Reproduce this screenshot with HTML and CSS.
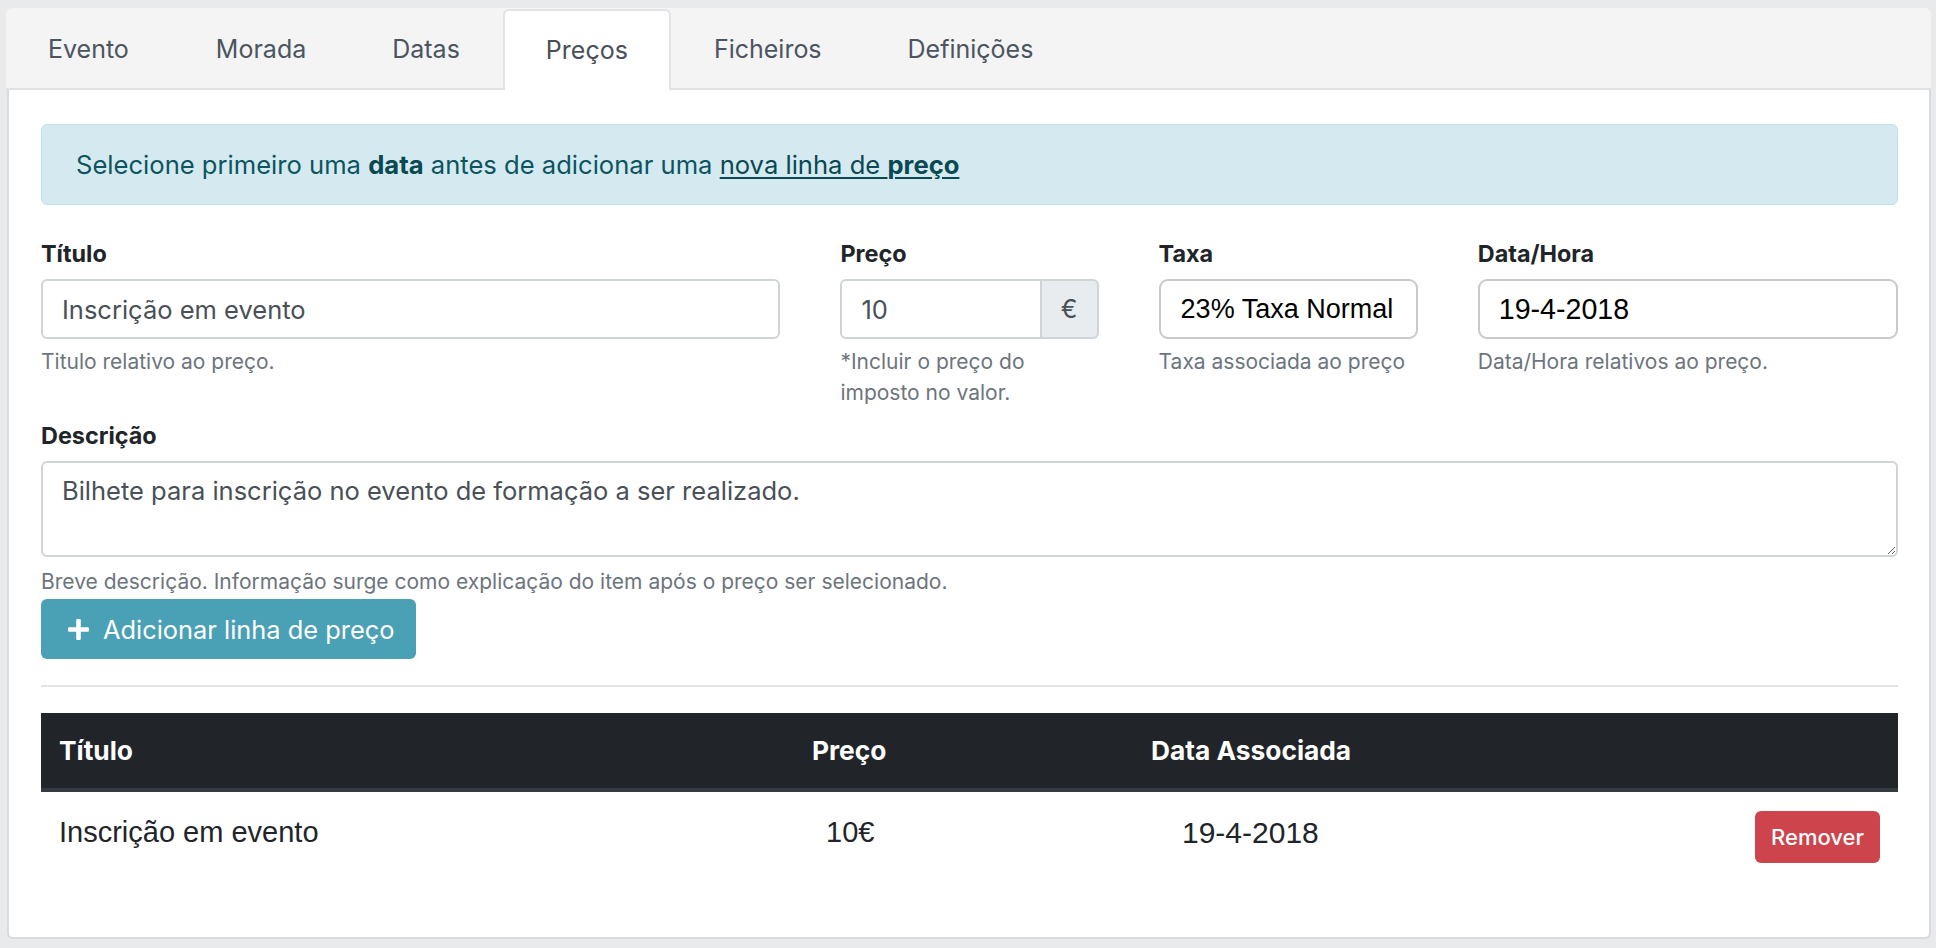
FILE: index.html
```html
<!DOCTYPE html>
<html lang="pt">
<head>
<meta charset="utf-8">
<title>Preços</title>
<link rel="stylesheet" href="styles.css">
</head>
<body>
<div class="page">
  <nav class="tabs">
    <a class="tab">Evento</a>
    <a class="tab">Morada</a>
    <a class="tab">Datas</a>
    <a class="tab active">Preços</a>
    <a class="tab">Ficheiros</a>
    <a class="tab">Definições</a>
  </nav>
  <section class="card">
    <div class="alert">Selecione primeiro uma <b>data</b> antes de adicionar uma <a class="alert-link">nova linha de <b>preço</b></a></div>

    <div class="form-row">
      <div class="group">
        <label class="label">Título</label>
        <input class="control" type="text" value="Inscrição em evento">
        <small class="help">Titulo relativo ao preço.</small>
      </div>
      <div class="group">
        <label class="label">Preço</label>
        <div class="input-group">
          <input class="control grouped" type="text" value="10">
          <span class="addon">€</span>
        </div>
        <small class="help">*Incluir o preço do imposto no valor.</small>
      </div>
      <div class="group">
        <label class="label">Taxa</label>
        <select class="native"><option>23% Taxa Normal</option></select>
        <small class="help">Taxa associada ao preço</small>
      </div>
      <div class="group">
        <label class="label">Data/Hora</label>
        <input class="native date" type="text" value="19-4-2018">
        <small class="help">Data/Hora relativos ao preço.</small>
      </div>
    </div>

    <div class="group">
      <label class="label">Descrição</label>
      <textarea class="control area">Bilhete para inscrição no evento de formação a ser realizado.</textarea>
      <small class="help help-area">Breve descrição. Informação surge como explicação do item após o preço ser selecionado.</small>
    </div>

    <button class="btn-add" type="button">
      <svg class="plus" viewBox="0 0 21 21" width="21" height="21" aria-hidden="true"><path d="M8.2 1.2a1.2 1.2 0 0 1 1.2-1.2h2.2a1.2 1.2 0 0 1 1.2 1.2v7h7a1.2 1.2 0 0 1 1.2 1.2v2.2a1.2 1.2 0 0 1-1.2 1.2h-7v7a1.2 1.2 0 0 1-1.2 1.2H9.4a1.2 1.2 0 0 1-1.2-1.2v-7h-7A1.2 1.2 0 0 1 0 11.6V9.4a1.2 1.2 0 0 1 1.2-1.2h7z" fill="#fff"/></svg>
      <span>Adicionar linha de preço</span>
    </button>

    <hr class="divider">

    <table class="table">
      <colgroup>
        <col class="c-title"><col class="c-price"><col class="c-date"><col>
      </colgroup>
      <thead>
        <tr><th>Título</th><th>Preço</th><th>Data Associada</th><th></th></tr>
      </thead>
      <tbody>
        <tr>
          <td class="td-text">Inscrição em evento</td>
          <td class="td-text td-price">10€</td>
          <td class="td-text td-date">19-4-2018</td>
          <td class="td-action"><button class="btn-remove" type="button">Remover</button></td>
        </tr>
      </tbody>
    </table>
  </section>
</div>
</body>
</html>
```

FILE: styles.css
```css
* { box-sizing: border-box; }

html, body { margin: 0; }

body {
  background: #e9eaec;
  font-family: Inter, "Noto Sans", "Liberation Sans", sans-serif;
  color: #212529;
  width: 1936px;
  height: 948px;
  overflow: hidden;
}

.page {
  padding: 8px 5px 0 5px;
}

/* Tabs */
.tabs {
  display: flex;
  height: 82px;
  margin-left: 1px;
  background: #f4f4f4;
  border-bottom: 2px solid #dfe1e4;
  border-radius: 6px 6px 0 0;
}

.tab {
  display: block;
  padding: 0 41px;
  border: 2px solid transparent;
  border-bottom: 0;
  font-size: 25px;
  line-height: 78px;
  color: #4b5561;
  text-decoration: none;
}

.tab:first-child {
  padding: 0 42px 0 40px;
}

.tab.active {
  background: #fff;
  color: #495057;
  border-color: #e1e3e6;
  border-radius: 6px 6px 0 0;
  margin-top: 1px;
  margin-bottom: -2px;
}

/* Card */
.card {
  margin-left: 2px;
  height: 849px;
  background: #fff;
  border: 2px solid #d9dadd;
  border-top: 0;
  border-radius: 0 0 6px 6px;
  padding: 34px 31px 31px 32px;
}

.alert {
  background: #d4eaf0;
  border: 1px solid #bfe2e9;
  border-radius: 6px;
  color: #0c5460;
  padding: 21px 34px;
  font-size: 25.6px;
  line-height: 37px;
  margin-bottom: 30px;
}

.alert b { font-weight: 700; color: #0a4852; }

.alert-link {
  color: #0a4852;
  text-decoration: underline;
  text-underline-offset: 3px;
}

/* Form */
.form-row {
  display: grid;
  grid-template-columns: 739fr 258fr 259fr 420fr;
  column-gap: 60px;
  margin-bottom: 9px;
}

.label {
  display: block;
  font-weight: 700;
  font-size: 23.4px;
  line-height: 37px;
  margin-bottom: 7px;
  color: #212529;
}

.control {
  display: block;
  width: 100%;
  height: 60px;
  border: 2px solid #ced4da;
  border-radius: 6px;
  padding: 0 19px;
  font-family: inherit;
  font-size: 25.5px;
  color: #495057;
  background: #fff;
  margin: 0;
}

.input-group {
  display: flex;
}

.control.grouped {
  flex: 1;
  min-width: 0;
  border-radius: 6px 0 0 6px;
}

.addon {
  display: flex;
  align-items: center;
  justify-content: center;
  width: 57px;
  height: 60px;
  background: #e9ecef;
  border: 2px solid #ced4da;
  border-left: 0;
  border-radius: 0 6px 6px 0;
  font-size: 25px;
  color: #495057;
}

.native {
  display: block;
  width: 100%;
  height: 60px;
  margin: 0;
  border: 2px solid #c9c9cb;
  border-radius: 9px;
  background: #fff;
  color: #000;
  font-family: "Liberation Sans", Arial, sans-serif;
  font-size: 27px;
  padding: 0 20px;
  -webkit-appearance: none;
  appearance: none;
}

.native.date {
  font-size: 28.6px;
  padding: 0 19px;
}

.help {
  display: block;
  font-size: 21px;
  line-height: 31px;
  color: #6c757d;
  margin-top: 7px;
}

.control.area {
  height: 96px;
  padding: 9px 19px;
  line-height: 37px;
  resize: both;
}

.help-area {
  margin-top: 10px;
  line-height: 30px;
}

.btn-add {
  display: inline-flex;
  align-items: center;
  gap: 14px;
  height: 60px;
  margin-top: 2px;
  padding: 0 22px 0 27px;
  background: #4aa0b5;
  color: #fff;
  border: 0;
  border-radius: 6px;
  font-family: inherit;
  font-size: 25.4px;
}

.plus { display: block; }

.divider {
  border: 0;
  border-top: 2px solid #e5e5e5;
  margin: 26px 0;
}

/* Table */
.table {
  width: 100%;
  border-collapse: collapse;
  table-layout: fixed;
  margin-bottom: 25px;
}

.c-title { width: 753px; }
.c-price { width: 339px; }
.c-date { width: 480px; }

.table th {
  background: #212529;
  color: #fff;
  font-weight: 700;
  font-size: 26.3px;
  line-height: 37px;
  padding: 19px 18px;
  text-align: left;
  border-bottom: 4px solid #343a40;
}

.table td {
  padding: 19px 18px;
  font-family: "Liberation Sans", Arial, sans-serif;
  font-size: 29px;
  line-height: 37px;
  color: #212529;
  vertical-align: top;
}

.table td.td-text { padding-top: 22px; }
.table td.td-price { padding-left: 32px; }
.table td.td-date { padding-left: 49px; font-size: 30px; }
.table td.td-action { text-align: right; }

.btn-remove {
  height: 52px;
  padding: 0 16px;
  background: #cd444c;
  color: #fff;
  border: 0;
  border-radius: 6px;
  font-family: Inter, "Noto Sans", sans-serif;
  font-weight: 500;
  font-size: 22px;
}
```
